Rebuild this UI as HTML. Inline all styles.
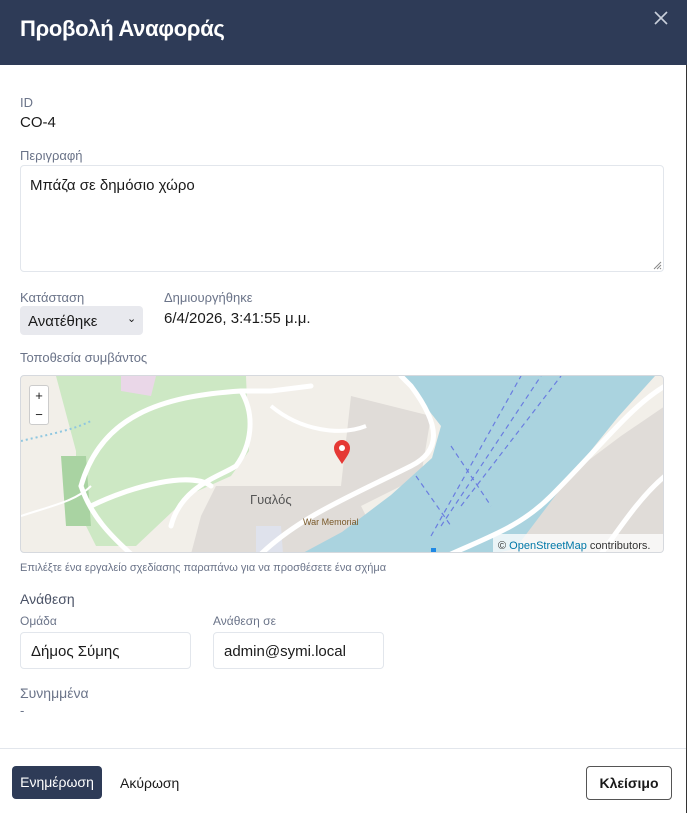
<!DOCTYPE html>
<html><head><meta charset="utf-8"><style>
*{box-sizing:border-box;margin:0;padding:0}
body{width:687px;height:813px;background:#fff;font-family:"Liberation Sans",sans-serif;color:#1a1a1a;position:relative;overflow:hidden}
.hdr{position:absolute;left:0;top:0;width:687px;height:65px;background:#2e3b57}
.hdr h1{position:absolute;left:20px;top:16px;font-size:22px;font-weight:bold;color:#fff;letter-spacing:-0.3px}
.lbl{position:absolute;font-size:13px;color:#6b7489}
.val{position:absolute;font-size:15px;color:#1a1a1a}
.box{position:absolute;border:1px solid #e2e6ec;border-radius:4px;background:#fff}
.rb{position:absolute;right:0;top:65px;width:1px;height:748px;background:#333}
</style></head><body>
<div class="hdr"><h1>Προβολή Αναφοράς</h1>
<svg style="position:absolute;left:654px;top:11px" width="14" height="14"><path d="M1 1L13 13M13 1L1 13" stroke="#c9cfdb" stroke-width="1.6"/></svg></div>
<div class="lbl" style="left:20px;top:95px">ID</div>
<div class="val" style="left:20px;top:114px">CO-4</div>
<div class="lbl" style="left:20px;top:148px">Περιγραφή</div>
<div class="box" style="left:20px;top:165px;width:644px;height:107px"><div style="position:absolute;left:9px;top:11px;font-size:15px">Μπάζα σε δημόσιο χώρο</div>
<svg style="position:absolute;right:1px;bottom:1px" width="10" height="10"><path d="M9 2L2 9M9 5L5 9M9 8L8 9" stroke="#888" stroke-width="1"/></svg></div>
<div class="lbl" style="left:20px;top:290px">Κατάσταση</div>
<div style="position:absolute;left:20px;top:306px;width:123px;height:29px;background:#e8e9ee;border-radius:4px"><span style="position:absolute;left:8px;top:7px;font-size:15px">Ανατέθηκε</span><span style="position:absolute;left:107px;top:6px;font-size:11px">⌄</span></div>
<div class="lbl" style="left:164px;top:290px">Δημιουργήθηκε</div>
<div class="val" style="left:164px;top:310px">6/4/2026, 3:41:55 μ.μ.</div>
<div class="lbl" style="left:20px;top:350px">Τοποθεσία συμβάντος</div>
<div style="position:absolute;left:20px;top:375px;width:644px;height:178px;border:1px solid #d6d9de;border-radius:4px;overflow:hidden;background:#f2efe9">
<svg width="644" height="178" style="position:absolute;left:0;top:0">
<polygon points="35,0 225,0 228,75 210,100 170,118 115,170 75,170 55,130 55,75" fill="#cde8c4"/>
<polygon points="100,0 135,0 130,20 100,15" fill="#ead7e8"/>
<polygon points="40,80 65,80 70,150 45,150" fill="#a9d3a2"/>
<polygon points="195,110 330,110 350,150 300,178 170,178 180,140" fill="#e0dcd8"/>
<polygon points="330,20 410,40 400,100 340,130 320,110" fill="#e0dcd8"/>
<polygon points="470,178 520,120 600,60 644,30 644,178" fill="#e0dcd8"/>
<polygon points="378,0 634,0 597,41 547,103 494,173 470,178 280,178 321,156 370,119 411,82 420,50 387,8" fill="#aad3df"/>
<polygon points="235,150 260,150 262,178 235,178" fill="#dfe2ec"/>
<g fill="none" stroke="#fff" stroke-width="5" stroke-linecap="round">
<path d="M60,110 C80,40 140,20 220,15 L250,15 L290,10"/>
<path d="M220,15 C235,40 230,70 215,90 C200,100 160,110 150,150"/>
<path d="M60,110 C70,140 90,160 110,178"/>
<path d="M70,130 C110,110 170,95 190,110"/>
<path d="M240,178 C280,140 330,120 390,90 C420,75 420,50 390,10 L380,0"/>
<path d="M430,178 C470,160 500,150 530,120 C580,70 610,30 644,10"/>
<path d="M580,178 C600,150 620,120 644,100"/>
</g>
<path d="M250,30 C280,55 320,60 345,50" stroke="#fff" stroke-width="4" fill="none"/>
<g stroke="#6a7de0" stroke-width="1.2" stroke-dasharray="5,4" fill="none">
<path d="M410,160 L500,0"/><path d="M420,150 L520,0"/><path d="M440,130 L540,0"/><path d="M430,70 L470,130"/><path d="M395,100 L430,150"/>
</g>
<path d="M0,65 C20,60 50,55 70,45" stroke="#8fc7e0" stroke-width="2" stroke-dasharray="2,3" fill="none"/>
<path d="M0,140 C30,130 55,125 70,110" stroke="#fff" stroke-width="2" fill="none"/>
<path d="M321,88 C316,80 313,77 313,72 a8,8 0 0 1 16,0 c0,5 -3,8 -8,16z" fill="#e53935"/>
<circle cx="321" cy="72" r="3" fill="#fff"/>
<text x="229" y="128" font-size="13" fill="#555" font-family="Liberation Sans">Γυαλός</text>
<text x="282" y="149" font-size="9" fill="#7a5a2a" font-family="Liberation Sans">War Memorial</text>
<rect x="410" y="172" width="5" height="6" fill="#1e88e5"/>
<rect x="472" y="158" width="172" height="20" fill="rgba(255,255,255,0.75)"/>
<text x="477" y="173" font-size="11" fill="#333" font-family="Liberation Sans">© <tspan fill="#0078a8">OpenStreetMap</tspan> contributors.</text>
</svg>
<div style="position:absolute;left:8px;top:9px;width:20px;height:40px;background:#fff;border:1px solid #ccc;border-radius:3px;font-size:13px;text-align:center;line-height:19px">+<br>−</div>
</div>
<div style="position:absolute;left:20px;top:562px;font-size:11px;color:#6b7489">Επιλέξτε ένα εργαλείο σχεδίασης παραπάνω για να προσθέσετε ένα σχήμα</div>
<div style="position:absolute;left:20px;top:591px;font-size:14px;color:#4a5266">Ανάθεση</div>
<div class="lbl" style="left:20px;top:614px;font-size:12px">Ομάδα</div>
<div class="lbl" style="left:213px;top:614px;font-size:12px">Ανάθεση σε</div>
<div class="box" style="left:20px;top:632px;width:171px;height:37px"><span style="position:absolute;left:10px;top:10px;font-size:15px">Δήμος Σύμης</span></div>
<div class="box" style="left:213px;top:632px;width:171px;height:37px"><span style="position:absolute;left:10px;top:10px;font-size:15px">admin@symi.local</span></div>
<div class="lbl" style="left:20px;top:685px;font-size:14px">Συνημμένα</div>
<div class="lbl" style="left:20px;top:703px">-</div>
<div style="position:absolute;left:0;top:748px;width:687px;height:1px;background:#e2e6ec"></div>
<div style="position:absolute;left:12px;top:766px;width:90px;height:33px;background:#2e3b57;border-radius:4px;color:#fff;font-size:14px;text-align:center;line-height:33px">Ενημέρωση</div>
<div style="position:absolute;left:120px;top:775px;font-size:14px">Ακύρωση</div>
<div style="position:absolute;left:586px;top:766px;width:86px;height:34px;border:1px solid #555;border-radius:4px;font-size:14px;font-weight:bold;text-align:center;line-height:32px">Κλείσιμο</div>
<div class="rb"></div>
</body></html>
